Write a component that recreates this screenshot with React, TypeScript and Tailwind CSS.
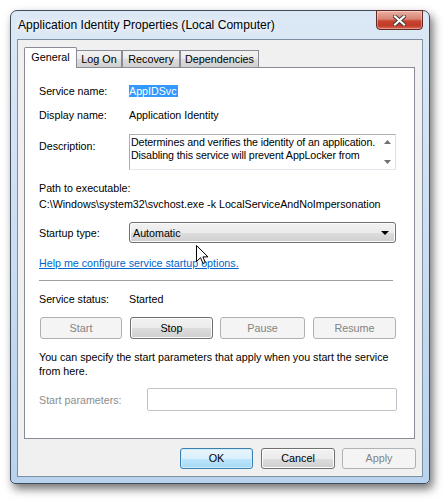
import React from "react";

const F = { fontFamily: '"Liberation Sans", Arial, sans-serif' };

function Btn({ children, disabled, className = "" }: { children: React.ReactNode; disabled?: boolean; className?: string }) {
  return (
    <div
      className={
        "flex items-center justify-center rounded-[3px] border text-[10.8px] leading-[13px] " +
        (disabled
          ? "border-[#adb2b5] bg-[#f4f4f4] text-[#838383] "
          : "border-[#707070] bg-[linear-gradient(180deg,#f2f2f2_0%,#ebebeb_50%,#dddddd_51%,#cfcfcf_100%)] text-black shadow-[inset_0_0_0_1px_#fcfcfc] ") +
        className
      }
    >
      {children}
    </div>
  );
}

export default function App() {
  return (
    <div className="relative w-[448px] h-[502px] bg-white overflow-hidden pt-[10px] pl-[10px]" style={F}>
      <div className="flex flex-col w-[420px] h-[474px] rounded-t-[7px] rounded-b-[5px] border border-[#3e4d5e] bg-[linear-gradient(180deg,#dce8f5_0%,#d2e2f3_30%,#c3d8ef_70%,#b9d2ee_100%)] shadow-[3px_5px_10px_rgba(0,0,0,0.55)] px-[6px] pb-[6px]">
        {/* title bar */}
        <div className="flex h-[28px] items-start">
          <span className="mt-[6px] ml-[1px] text-[12.1px] leading-[16px] text-black [text-shadow:0_0_6px_#ffffff,0_0_10px_#ffffff]">
            Application Identity Properties (Local Computer)
          </span>
          <div className="ml-auto -mt-[1px] flex h-[20px] w-[47px] items-center justify-center rounded-b-[4px] border border-[#5e2a22] bg-[linear-gradient(180deg,#eab0a4_0%,#d98272_45%,#c8452f_55%,#c0392b_80%,#d9694f_100%)] shadow-[inset_0_0_0_1px_rgba(255,255,255,0.35)]">
            <svg width="13" height="11" viewBox="0 0 13 11">
              <path d="M2 1.5 L11 9.5 M11 1.5 L2 9.5" stroke="#3a3a3a" strokeWidth="4" strokeLinecap="square" />
              <path d="M2 1.5 L11 9.5 M11 1.5 L2 9.5" stroke="#ffffff" strokeWidth="2.2" strokeLinecap="square" />
            </svg>
          </div>
        </div>
        {/* client */}
        <div className="flex flex-1 flex-col border border-[#7d8fa3] bg-[#f0f0f0] pl-[6px] pt-[7px]">
          {/* tabs */}
          <div className="flex h-[20px] items-end text-[10.8px] leading-[13px] text-black">
            <div className="relative z-10 -mb-[1px] flex h-[21px] w-[53px] items-center justify-center rounded-t-[2px] border-l border-t border-r border-[#898c95] bg-white pb-[1px]">
              General
            </div>
            <div className="flex h-[17px] w-[45px] items-center justify-center border-t border-r border-[#898c95] bg-[linear-gradient(180deg,#f2f2f2_0%,#ebebeb_50%,#dddddd_51%,#cfcfcf_100%)]">
              Log On
            </div>
            <div className="flex h-[17px] w-[58px] items-center justify-center border-l border-t border-r border-[#898c95] bg-[linear-gradient(180deg,#f2f2f2_0%,#ebebeb_50%,#dddddd_51%,#cfcfcf_100%)]">
              Recovery
            </div>
            <div className="flex h-[17px] w-[79px] items-center justify-center border-l border-t border-r border-[#898c95] bg-[linear-gradient(180deg,#f2f2f2_0%,#ebebeb_50%,#dddddd_51%,#cfcfcf_100%)]">
              Dependencies
            </div>
          </div>
          {/* pane */}
          <div className="flex h-[372px] w-[391px] flex-col border border-[#898c95] bg-white pl-[14px] text-[10.7px] leading-[14px] text-black">
            <div className="mt-[16px] flex h-[14px] items-center">
              <span className="w-[90px]">Service name:</span>
              <span className="bg-[#3399ff] pr-[1px] text-white leading-[12px]">AppIDSvc</span>
            </div>
            <div className="mt-[10px] flex h-[14px] items-center">
              <span className="w-[90px]">Display name:</span>
              <span>Application Identity</span>
            </div>
            <div className="mt-[12px] flex items-start">
              <span className="w-[90px] pt-[5px]">Description:</span>
              <div className="flex h-[36px] w-[267px] border border-[#abadb3] border-r-[#dbdfe6] border-b-[#e3e9ef] bg-white">
                <div className="flex-1 overflow-hidden whitespace-nowrap pl-[1px] pt-[1px] leading-[13px] tracking-[-0.12px]">
                  <div>Determines and verifies the identity of an application.</div>
                  <div>Disabling this service will prevent AppLocker from</div>
                </div>
                <div className="flex w-[16px] shrink-0 flex-col items-center justify-between py-[5px]">
                  <svg width="7" height="4" viewBox="0 0 7 4"><path d="M0 4 L3.5 0 L7 4 Z" fill="#707070" /></svg>
                  <svg width="7" height="4" viewBox="0 0 7 4"><path d="M0 0 L3.5 4 L7 0 Z" fill="#707070" /></svg>
                </div>
              </div>
            </div>
            <div className="mt-[11px] h-[14px]">Path to executable:</div>
            <div className="mt-[2px] h-[14px] whitespace-nowrap">C:\Windows\system32\svchost.exe -k LocalServiceAndNoImpersonation</div>
            <div className="mt-[11px] flex h-[21px] items-center">
              <span className="w-[90px]">Startup type:</span>
              <div className="flex h-[21px] w-[267px] items-center rounded-[3px] border border-[#707070] bg-[linear-gradient(180deg,#f2f2f2_0%,#ebebeb_50%,#dddddd_51%,#cfcfcf_100%)] pl-[3px] pr-[6px] shadow-[inset_0_0_0_1px_#fcfcfc]">
                <span className="flex-1">Automatic</span>
                <svg width="8" height="4" viewBox="0 0 8 4"><path d="M0 0 L8 0 L4 4 Z" fill="#000" /></svg>
              </div>
            </div>
            <div className="mt-[13px] h-[14px]">
              <span className="text-[#0066cc] underline">Help me configure service startup options.</span>
            </div>
            <div className="mt-[10px] h-[1px] w-[354px] bg-[#a0a0a0]" />
            <div className="mt-[11px] flex h-[14px] items-center">
              <span className="w-[90px]">Service status:</span>
              <span>Started</span>
            </div>
            <div className="mt-[11px] flex h-[22px]">
              <Btn disabled className="ml-[1px] w-[82px]">Start</Btn>
              <Btn className="ml-[8px] w-[83px]">Stop</Btn>
              <Btn disabled className="ml-[7px] w-[85px]">Pause</Btn>
              <Btn disabled className="ml-[8px] w-[83px]">Resume</Btn>
            </div>
            <div className="mt-[11px] w-[360px]">
              You can specify the start parameters that apply when you start the service from here.
            </div>
            <div className="mt-[10px] flex h-[23px] items-center">
              <span className="w-[108px] text-[#8d8d8d]">Start parameters:</span>
              <div className="h-[23px] w-[250px] rounded-[2px] border border-[#c0c3c9] bg-white" />
            </div>
          </div>
          {/* bottom buttons */}
          <div className="mt-[9px] flex h-[21px] justify-end pr-[6px]">
            <div className="flex w-[73px] items-center justify-center rounded-[3px] border border-[#3c7fb1] bg-[linear-gradient(180deg,#eaf6fd_0%,#d9f0fc_50%,#bee6fd_51%,#a7d9f5_100%)] text-[10.8px] leading-[13px] text-black shadow-[inset_0_0_0_1px_#d0ecfb]">
              OK
            </div>
            <Btn className="ml-[8px] w-[74px]">Cancel</Btn>
            <Btn disabled className="ml-[7px] w-[74px]">Apply</Btn>
          </div>
        </div>
      </div>
      {/* mouse cursor */}
      <svg className="absolute left-[196px] top-[245px]" width="13" height="20" viewBox="0 0 13 20">
        <path d="M0.5 0.5 L0.5 16.5 L4.5 12.7 L7 18.5 L9.3 17.5 L6.9 11.9 L12 11.9 Z" fill="#ffffff" stroke="#000000" strokeWidth="1" strokeLinejoin="miter" />
      </svg>
    </div>
  );
}
